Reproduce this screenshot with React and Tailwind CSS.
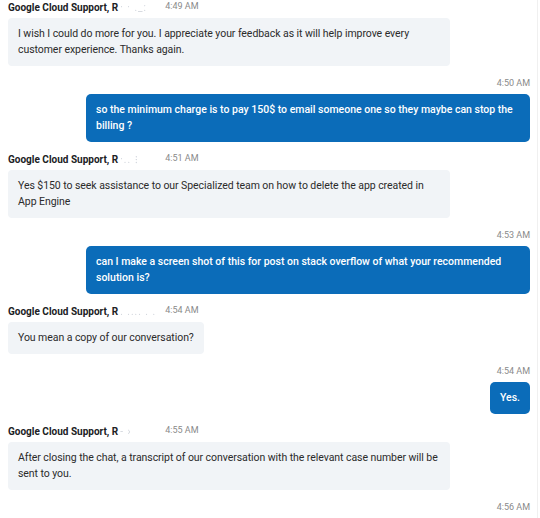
import React from 'react';

const messages = [
  { from: 'agent', time: '4:49 AM', blur: '·  · ._:', text: 'I wish I could do more for you. I appreciate your feedback as it will help improve every customer experience. Thanks again.' },
  { from: 'me', time: '4:50 AM', text: 'so the minimum charge is to pay 150$ to email someone one so they maybe can stop the billing ?' },
  { from: 'agent', time: '4:51 AM', blur: ' ·.. ⁝', text: 'Yes $150 to seek assistance to our Specialized team on how to delete the app created in App Engine' },
  { from: 'me', time: '4:53 AM', text: 'can I make a screen shot of this for post on stack overflow of what your recommended solution is?' },
  { from: 'agent', time: '4:54 AM', blur: '. .... . .', text: 'You mean a copy of our conversation?' },
  { from: 'me', time: '4:54 AM', text: 'Yes.' },
  { from: 'agent', time: '4:55 AM', blur: '  -  ›', text: 'After closing the chat, a transcript of our conversation with the relevant case number will be sent to you.' },
];

function AgentMessage({ msg }) {
  return (
    <div className="flex flex-col items-start">
      <div className="flex items-center h-[14px] mb-1 whitespace-nowrap">
        <span className="text-[10px] font-bold text-[#202124]">Google Cloud Support, R</span>
        <span className="text-[10px] text-gray-300 blur-[0.6px] w-[47px] pl-[2px] tracking-[1px]">{msg.blur}</span>
        <span className="text-[9px] text-[#8a8a8a]">{msg.time}</span>
      </div>
      <div className="max-w-[442px] bg-[#f1f4f7] rounded-[4px] px-[10px] py-2 text-[10.5px] leading-4 tracking-[-0.06px] text-[#2b2b2b]">
        {msg.text}
      </div>
    </div>
  );
}

function MyMessage({ msg }) {
  return (
    <div className="flex flex-col items-end">
      <div className="h-[14px] mb-[4px] text-[9px] leading-[14px] text-[#8a8a8a]">{msg.time}</div>
      <div className="max-w-[444px] bg-[#0b6cb9] rounded-[5px] px-[10px] py-2 text-[10.5px] leading-4 font-medium text-white">
        {msg.text}
      </div>
    </div>
  );
}

export default function App() {
  return (
    <div className="w-[540px] h-[518px] bg-white overflow-hidden flex" style={{ fontFamily: 'Roboto, "Liberation Sans", sans-serif' }}>
      <div className="flex-1 pl-2 pr-[7px] flex flex-col gap-[10px]">
        {messages.map((m, i) =>
          m.from === 'agent' ? <AgentMessage key={i} msg={m} /> : <MyMessage key={i} msg={m} />
        )}
        <div className="flex justify-end">
          <div className="h-[14px] text-[9px] leading-[14px] text-[#8a8a8a]">4:56 AM</div>
        </div>
      </div>
      <div className="w-px bg-[#f0f0f0] mr-[2px]" />
    </div>
  );
}
